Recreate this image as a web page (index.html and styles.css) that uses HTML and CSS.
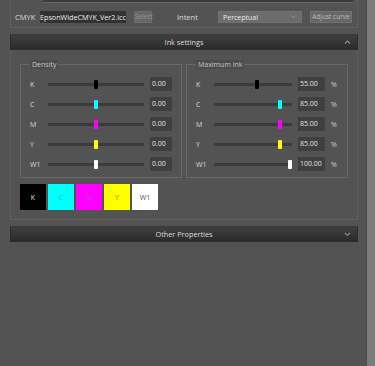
FILE: index.html
```html
<!DOCTYPE html>
<html lang="en">
<head>
    <meta charset="UTF-8">
    <meta name="viewport" content="width=device-width, initial-scale=1.0">
    <title>Ink settings</title>
    <link rel="stylesheet" href="styles.css">
</head>
<body>
    <div class="window">
        <div class="main">
            <div class="prev-panel">
                <div class="prev-strip"></div>
                <div class="profile-row">
                    <span class="row-label">CMYK</span>
                    <div class="file-field">EpsonWideCMYK_Ver2.icc</div>
                    <button class="btn btn-select" disabled>Select</button>
                    <span class="intent-label">Intent</span>
                    <div class="dropdown">
                        <span>Perceptual</span>
                        <svg width="6" height="4" viewBox="0 0 6 4"><polyline points="0.5,0.5 3,3 5.5,0.5" fill="none" stroke="#8c8c8c" stroke-width="1"/></svg>
                    </div>
                    <button class="btn btn-adjust">Adjust curve</button>
                </div>
            </div>

            <div class="section-header">
                <span></span>
                <span class="section-title">Ink settings</span>
                <svg class="chevron" width="7" height="4" viewBox="0 0 7 4"><polyline points="1,3.5 3.5,1 6,3.5" fill="none" stroke="#8e8e8e" stroke-width="1.1"/></svg>
            </div>
            <div class="section-body">
                <div class="groups">
                    <fieldset class="group density">
                        <legend>Density</legend>
                        <div class="ink-row">
                            <span class="ink-label">K</span>
                            <div class="track"><div class="thumb k" style="left: 50%"></div></div>
                            <div class="value">0.00</div>
                        </div>
                        <div class="ink-row">
                            <span class="ink-label">C</span>
                            <div class="track"><div class="thumb c" style="left: 50%"></div></div>
                            <div class="value">0.00</div>
                        </div>
                        <div class="ink-row">
                            <span class="ink-label">M</span>
                            <div class="track"><div class="thumb m" style="left: 50%"></div></div>
                            <div class="value">0.00</div>
                        </div>
                        <div class="ink-row">
                            <span class="ink-label">Y</span>
                            <div class="track"><div class="thumb y" style="left: 50%"></div></div>
                            <div class="value">0.00</div>
                        </div>
                        <div class="ink-row">
                            <span class="ink-label">W1</span>
                            <div class="track"><div class="thumb w" style="left: 50%"></div></div>
                            <div class="value">0.00</div>
                        </div>
                    </fieldset>

                    <fieldset class="group max-ink">
                        <legend>Maximum ink</legend>
                        <div class="ink-row">
                            <span class="ink-label">K</span>
                            <div class="track"><div class="thumb k" style="left: 55%"></div></div>
                            <div class="value">55.00</div>
                            <span class="unit">%</span>
                        </div>
                        <div class="ink-row">
                            <span class="ink-label">C</span>
                            <div class="track"><div class="thumb c" style="left: 84%"></div></div>
                            <div class="value">85.00</div>
                            <span class="unit">%</span>
                        </div>
                        <div class="ink-row">
                            <span class="ink-label">M</span>
                            <div class="track"><div class="thumb m" style="left: 84%"></div></div>
                            <div class="value">85.00</div>
                            <span class="unit">%</span>
                        </div>
                        <div class="ink-row">
                            <span class="ink-label">Y</span>
                            <div class="track"><div class="thumb y" style="left: 84%"></div></div>
                            <div class="value">85.00</div>
                            <span class="unit">%</span>
                        </div>
                        <div class="ink-row">
                            <span class="ink-label">W1</span>
                            <div class="track"><div class="thumb w" style="left: 98%"></div></div>
                            <div class="value">100.00</div>
                            <span class="unit">%</span>
                        </div>
                    </fieldset>
                </div>

                <div class="swatches">
                    <div class="swatch sw-k">K</div>
                    <div class="swatch sw-c">C</div>
                    <div class="swatch sw-m">M</div>
                    <div class="swatch sw-y">Y</div>
                    <div class="swatch sw-w">W1</div>
                </div>
            </div>

            <div class="section-header other">
                <span></span>
                <span class="section-title">Other Properties</span>
                <svg class="chevron" width="7" height="4" viewBox="0 0 7 4"><polyline points="1,1 3.5,3.3 6,1" fill="none" stroke="#8e8e8e" stroke-width="1.1"/></svg>
            </div>
        </div>
        <div class="scroll-strip"></div>
    </div>
</body>
</html>
```

FILE: styles.css
```css
body {
    margin: 0;
    padding: 0;
    background-color: #535353;
    font-family: "Open Sans", "Noto Sans", sans-serif;
    font-size: 7px;
    color: #dcdcdc;
}
.window {
    display: flex;
    height: 100vh;
}
.main {
    width: 366px;
    padding: 0 8px 0 10px;
    box-sizing: border-box;
}
.scroll-strip {
    width: 9px;
    background-color: #7b7b7b;
    border-left: 1px solid #4d4d4d;
}

/* profile row (bottom of the previous panel) */
.prev-panel {
    height: 28px;
    box-sizing: border-box;
    border: 1px solid #5f5f5f;
    border-top: none;
}
.prev-strip {
    height: 2px;
    margin: 0 4px 0 32px;
    background-color: #3b3b3b;
    border-bottom: 1px solid #676767;
}
.profile-row {
    display: flex;
    align-items: center;
    height: 24px;
    padding: 4px 0 0 4px;
    box-sizing: border-box;
}
.row-label {
    width: 25px;
    font-size: 7.5px;
}
.file-field {
    width: 86px;
    height: 12px;
    line-height: 12px;
    background-color: #323232;
    color: #ececec;
    font-size: 7.2px;
    overflow: hidden;
    white-space: nowrap;
}
.btn {
    height: 12px;
    padding: 0;
    font-family: inherit;
    font-size: 6.5px;
    line-height: 10px;
    border: 1px solid #727272;
    background-color: #676767;
    color: #bdbdbd;
}
.btn-select {
    width: 18px;
    margin-left: 8px;
    color: #979797;
    border-color: #6c6c6c;
}
.btn-adjust {
    width: 42px;
    margin-left: 8px;
}
.intent-label {
    width: 41px;
    margin-left: 25px;
    font-size: 7.5px;
}
.dropdown {
    width: 84px;
    height: 12px;
    box-sizing: border-box;
    padding: 0 5px 0 4px;
    display: flex;
    align-items: center;
    justify-content: space-between;
    background-color: #6c6c6c;
    border: 1px solid #727272;
    color: #eaeaea;
}

/* collapsible section headers */
.section-header {
    display: grid;
    grid-template-columns: 1fr auto 1fr;
    align-items: center;
    height: 16px;
    margin-top: 6px;
    box-sizing: border-box;
    border: 1px solid #2a2a2a;
    border-top-color: #3a3a3a;
    background: linear-gradient(#3e3e3e, #2b2b2b);
    color: #dedede;
    font-size: 7.3px;
}
.chevron {
    justify-self: end;
    margin-right: 6px;
}

.section-body {
    border: 1px solid #5f5f5f;
    border-top: none;
    padding: 10px 9px 9px;
}
.groups {
    display: flex;
    gap: 4px;
}
.group {
    flex: 0 0 162px;
    box-sizing: border-box;
    margin: 0;
    padding: 5px 9px 3px;
    min-width: 0;
    border: 1px solid #686868;
}
.group legend {
    padding: 0 2px;
    line-height: 9px;
    background-color: #4b4b4b;
    color: #c8c8c8;
}
.ink-row {
    display: grid;
    align-items: center;
    column-gap: 6px;
    height: 20px;
}
.density .ink-row {
    grid-template-columns: 12px 96px 22px;
}
.max-ink .ink-row {
    grid-template-columns: 12px 78px 27px 7px;
}
.track {
    position: relative;
    height: 3px;
    background-color: #3b3b3b;
}
.thumb {
    position: absolute;
    top: -3px;
    width: 4px;
    height: 9px;
    margin-left: -2px;
    border-radius: 1px;
}
.thumb.k { background-color: #000; }
.thumb.c { background-color: #00ffff; }
.thumb.m { background-color: #ff00ff; }
.thumb.y { background-color: #ffff00; }
.thumb.w { background-color: #ffffff; }
.value {
    height: 14px;
    line-height: 14px;
    padding-left: 2px;
    background-color: #3f3f3f;
    color: #e2e2e2;
}
.unit {
    color: #cfcfcf;
}

.swatches {
    display: flex;
    gap: 2px;
    margin-top: 6px;
}
.swatch {
    width: 26px;
    height: 26px;
    display: flex;
    align-items: center;
    justify-content: center;
}
.sw-k { background-color: #000; color: #e0e0e0; }
.sw-c { background-color: #00ffff; color: #3aa9bb; }
.sw-m { background-color: #ff00ff; color: #b545bd; }
.sw-y { background-color: #ffff00; color: #7a7a1a; }
.sw-w { background-color: #ffffff; color: #505050; }
```
